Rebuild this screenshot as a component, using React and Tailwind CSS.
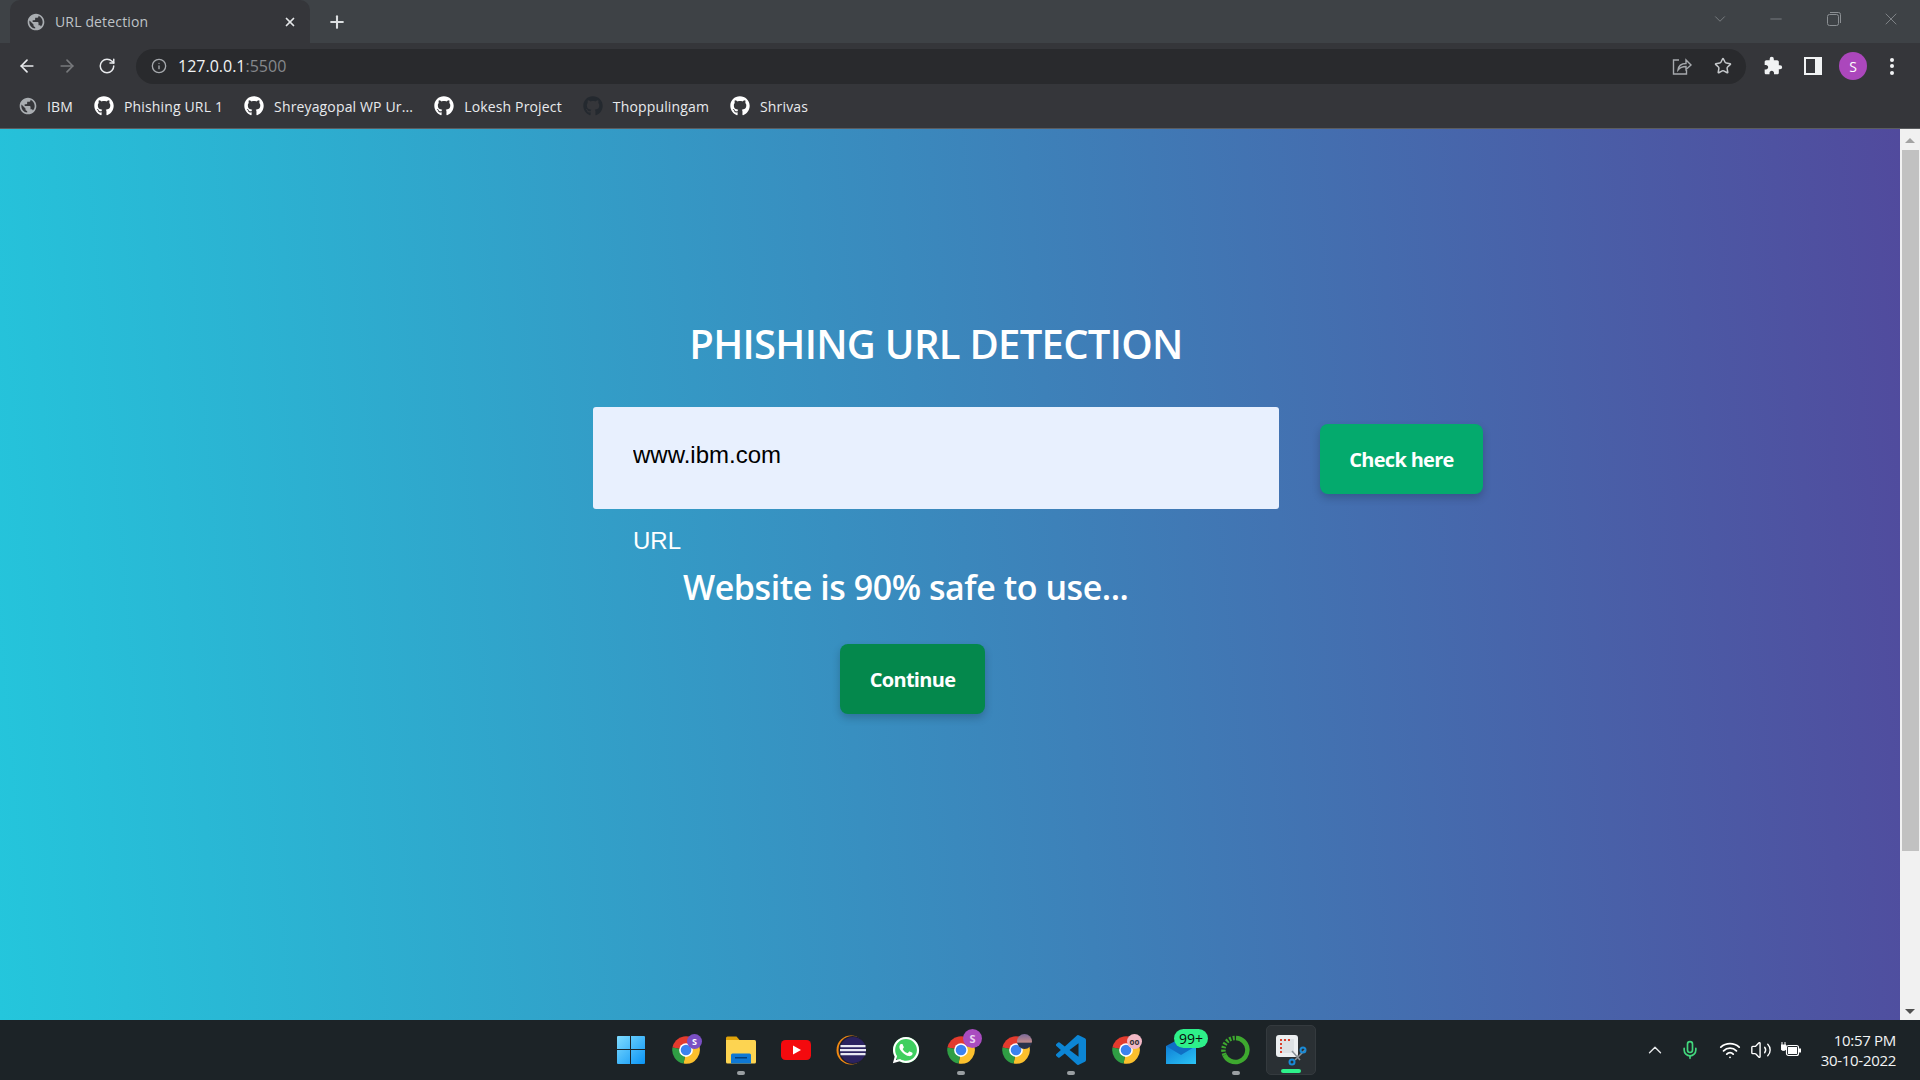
import React from "react";
import { FaGithub, FaWhatsapp } from "react-icons/fa";
import { MdPublic, MdExtension } from "react-icons/md";
import { ArrowLeft, ArrowRight, RotateCw, Info, Star, X, Plus, ChevronDown, Minus, Mic, Wifi, Volume2, ChevronUp } from "lucide-react";

const Chrome = ({ badge }) => (
  <div className="relative w-[30px] h-[30px]">
    <svg viewBox="0 0 48 48" className="w-[30px] h-[30px]">
      <path d="M24 24L2.33 20.18A22 22 0 0 1 43.05 13Z" fill="#e33b2e" />
      <path d="M24 24L43.05 13A22 22 0 0 1 20.18 45.67Z" fill="#fbc02d" />
      <path d="M24 24L20.18 45.67A22 22 0 0 1 2.33 20.18Z" fill="#2f9e44" />
      <circle cx="24" cy="24" r="11" fill="#fff" />
      <circle cx="24" cy="24" r="8.5" fill="#3b82f0" />
    </svg>
    {badge}
  </div>
);

const Win = () => (
  <svg viewBox="0 0 30 30" className="w-[30px] h-[30px]">
    <defs>
      <linearGradient id="wg" x1="0" y1="0" x2="1" y2="1">
        <stop offset="0" stopColor="#7fdcff" />
        <stop offset="1" stopColor="#0a94f5" />
      </linearGradient>
    </defs>
    <path d="M1 2a1 1 0 0 1 1-1h12v13H1ZM15 1h13a1 1 0 0 1 1 1v12H15ZM1 15h13v14H2a1 1 0 0 1-1-1ZM15 15h14v13a1 1 0 0 1-1 1H15Z" fill="url(#wg)" />
  </svg>
);

const Folder = () => (
  <svg viewBox="0 0 30 30" className="w-[30px] h-[30px]">
    <path d="M0 3a1.500 1.500 0 0 1 1.500-1.500h9L14 5.500H0Z" fill="#e0a30a" />
    <path d="M0 5h28.500a1.500 1.500 0 0 1 1.500 1.500V27a1.500 1.500 0 0 1-1.500 1.500h-27A1.500 1.500 0 0 1 0 27Z" fill="#fdd451" />
    <path d="M5 20a1.500 1.500 0 0 1 1.500-1.500h17A1.500 1.500 0 0 1 25 20v8.500H5Z" fill="#0f78d4" />
    <rect x="9" y="22" width="12" height="1.500" fill="#063f78" />
  </svg>
);

const Youtube = () => (
  <svg viewBox="0 0 30 30" className="w-[30px] h-[30px]">
    <rect x="0" y="5" width="30" height="20" rx="4.500" fill="#f40a0e" />
    <path d="M12 10.500L20 15L12 19.500Z" fill="#fff" />
  </svg>
);

const Eclipse = () => (
  <svg viewBox="0 0 30 30" className="w-[30px] h-[30px]">
    <circle cx="15" cy="15" r="14.500" fill="#f28a11" />
    <circle cx="16.500" cy="15" r="14" fill="#1c1d2e" />
    <circle cx="17" cy="15" r="13" fill="#2b2360" />
    <path d="M4.500 10h25v2.200h-25ZM4 14h26v2.200H4ZM4.500 18h25v2.200h-25Z" fill="#e8e8f2" />
  </svg>
);

const Whats = () => (
  <div className="relative w-[30px] h-[30px]">
    <div className="absolute left-[2px] top-[2px] w-[26px] h-[26px] rounded-full bg-[#3fcf5f]" />
    <FaWhatsapp className="absolute inset-0 w-[30px] h-[30px] text-white" />
  </div>
);

const VSCode = () => (
  <svg viewBox="0 0 24 24" className="w-[30px] h-[30px]">
    <path fill="#0c85d4" d="M23.15 2.587L18.21.21a1.494 1.494 0 0 0-1.705.29l-9.46 8.63-4.12-3.128a.999.999 0 0 0-1.276.057L.327 7.261A1 1 0 0 0 .326 8.74L3.899 12 .326 15.26a1 1 0 0 0 .001 1.479L1.65 17.94a.999.999 0 0 0 1.276.057l4.12-3.128 9.46 8.63a1.492 1.492 0 0 0 1.704.29l4.942-2.377A1.5 1.5 0 0 0 24 20.06V3.939a1.5 1.5 0 0 0-.85-1.352zm-5.146 14.861L10.826 12l7.178-5.448v10.896z" />
  </svg>
);

const Mail = () => (
  <div className="relative w-[30px] h-[30px]">
    <svg viewBox="0 0 30 30" className="w-[30px] h-[30px]">
      <defs>
        <linearGradient id="mg" x1="0" y1="0" x2="1" y2="1">
          <stop offset="0" stopColor="#0f7fd6" />
          <stop offset="1" stopColor="#2bc4f5" />
        </linearGradient>
      </defs>
      <path d="M0 11L15 3L30 11V29H0Z" fill="#0f6fc4" />
      <path d="M0 11L15 20L30 11V29H0Z" fill="url(#mg)" />
    </svg>
    <div className="absolute left-[8px] top-[-6px] w-[34px] h-[19px] rounded-full bg-[#2ef08a] text-[#0b0b0b] text-[14px] leading-[19px] text-center">99+</div>
  </div>
);

const Ring = () => (
  <svg viewBox="0 0 30 30" className="w-[30px] h-[30px]">
    <path d="M15 3A12 12 0 1 1 3.500 20" fill="none" stroke="#3ea82f" strokeWidth="4.500" />
    <path d="M3.500 20A12 12 0 0 1 15 3" fill="none" stroke="#3ea82f" strokeWidth="4.500" strokeDasharray="2 1.500" />
  </svg>
);

const Snip = () => (
  <svg viewBox="0 0 32 32" className="w-[32px] h-[32px]">
    <rect x="1" y="1" width="22" height="22" rx="3" fill="#eceff1" />
    <rect x="5" y="5" width="14" height="14" fill="#dde1e4" />
    <path d="M5 5h2v2H5ZM9 5h2v2H9ZM13 5h2v2h-2ZM5 9h2v2H5ZM5 13h2v2H5ZM5 17h2v2H5Z" fill="#d8402c" />
    <path d="M17 17L25 26M30 16L20 26" stroke="#8a9299" strokeWidth="1.500" fill="none" />
    <circle cx="28" cy="16" r="2.500" fill="none" stroke="#1a8ad6" strokeWidth="2" />
    <circle cx="17" cy="28" r="2.500" fill="none" stroke="#1a8ad6" strokeWidth="2" />
  </svg>
);

const Dot = ({ on }) => (
  <div className={on ? "absolute left-1/2 -translate-x-1/2 bottom-[-10px] w-[8px] h-[4px] rounded-full bg-[#9a9fa2]" : "hidden"} />
);

const Slot = ({ children, on }) => (
  <div className="relative w-[30px] h-[30px] mr-[25px]">
    {children}
    <Dot on={on} />
  </div>
);

const Mark = ({ text, dark }) => (
  <div className="flex items-center gap-[10px]">
    <FaGithub className={dark ? "w-[20px] h-[20px] text-[#24292f]" : "w-[20px] h-[20px] text-white"} />
    <span>{text}</span>
  </div>
);

export default function App() {
  return (
    <div className="h-screen w-full overflow-hidden flex flex-col font-['Open_Sans',sans-serif] bg-[#35363a]">
      {/* tab strip */}
      <div className="h-[43px] shrink-0 bg-[#3e4246] flex items-end pl-[10px] text-[#bfc3c7]">
        <div className="w-[300px] h-[43px] bg-[#35363a] rounded-t-[10px] flex items-center pl-[16px] pr-[13px]">
          <MdPublic className="w-[20px] h-[20px] text-[#a9adb1]" />
          <span className="ml-[9px] text-[14px] tracking-[0.15px] flex-1">URL detection</span>
          <X className="w-[14px] h-[14px] text-[#e4e6e8]" strokeWidth={3} />
        </div>
        <Plus className="ml-[17px] mb-[11px] w-[20px] h-[20px] text-[#dcdfe1]" strokeWidth={2.500} />
        <div className="flex-1" />
        <div className="flex items-center h-[43px] pb-[6px] text-[#8b8f93]">
          <ChevronDown className="w-[18px] h-[18px] mr-[38px]" strokeWidth={1} />
          <Minus className="w-[18px] h-[18px] mr-[42px]" strokeWidth={1} />
          <svg viewBox="0 0 14 14" className="w-[14px] h-[14px] mr-[40px]" fill="none" stroke="currentColor">
            <rect x="0.500" y="2.500" width="11" height="11" rx="2" />
            <path d="M3 .5h8.500a2 2 0 0 1 2 2V11" />
          </svg>
          <X className="w-[20px] h-[20px] mr-[19px]" strokeWidth={1} />
        </div>
      </div>
      {/* toolbar */}
      <div className="h-[44px] shrink-0 flex items-center pt-[2px]">
        <ArrowLeft className="ml-[17px] w-[20px] h-[20px] text-[#e8eaed]" strokeWidth={2} />
        <ArrowRight className="ml-[20px] w-[20px] h-[20px] text-[#77797c]" strokeWidth={2} />
        <RotateCw className="ml-[21px] w-[18px] h-[18px] text-[#e8eaed]" strokeWidth={2} />
        <div className="ml-[20px] w-[1610px] h-[35px] rounded-full bg-[#292a2d] flex items-center pl-[15px]">
          <Info className="w-[16px] h-[16px] text-[#a6a9ad]" strokeWidth={2} />
          <span className="ml-[11px] text-[16px] text-[#f1f3f4]">127.0.0.1<span className="text-[#85888c]">:5500</span></span>
          <div className="flex-1" />
          <svg viewBox="0 0 20 18" className="w-[20px] h-[18px] mr-[22px]" fill="none" stroke="#a6a9ad" strokeWidth="1.400">
            <path d="M7 3H1.500v14h13v-4" />
            <path d="M6 13c.5-4 3.500-6.500 8-6.500V3l5 5-5 4.500V9.500c-3 0-6 1-8 3.500Z" />
          </svg>
          <Star className="w-[18px] h-[18px] text-[#c5c8cb] mr-[14px]" strokeWidth={2} />
        </div>
        <MdExtension className="ml-[17px] w-[20px] h-[20px] text-[#f1f3f4]" />
        <svg viewBox="0 0 18 18" className="ml-[21px] w-[18px] h-[18px]">
          <path d="M0 0h18v18H0ZM2 2v14h9V2Z" fill="#f1f3f4" fillRule="evenodd" />
          <rect x="11" y="2" width="5" height="14" fill="#f1f3f4" />
        </svg>
        <div className="ml-[17px] w-[28px] h-[28px] rounded-full bg-[#ab47bc] text-white text-[14px] flex items-center justify-center">S</div>
        <div className="ml-[23px] flex flex-col gap-[2.500px]">
          <div className="w-[4px] h-[4px] rounded-full bg-[#f1f3f4]" />
          <div className="w-[4px] h-[4px] rounded-full bg-[#f1f3f4]" />
          <div className="w-[4px] h-[4px] rounded-full bg-[#f1f3f4]" />
        </div>
      </div>
      {/* bookmarks */}
      <div className="h-[42px] shrink-0 border-b border-[#5b5d60] flex items-center pl-[18px] pb-[3px] gap-[21px] text-[14px] tracking-[0.15px] text-[#e8eaed]">
        <div className="flex items-center gap-[9px]">
          <MdPublic className="w-[20px] h-[20px] text-[#a9adb1]" />
          <span>IBM</span>
        </div>
        <Mark text="Phishing URL 1" />
        <Mark text="Shreyagopal WP Ur..." />
        <Mark text="Lokesh Project" />
        <Mark text="Thoppulingam" dark />
        <Mark text="Shrivas" />
      </div>
      {/* page + scrollbar */}
      <div className="flex-1 min-h-0 flex">
        <main className="flex-1 bg-[linear-gradient(85deg,#24c6dc,#514a9d)] text-white pl-[593px] pt-[190px]">
          <h1 className="w-[686px] text-center text-[40px] leading-[50px] tracking-[-0.7px] font-semibold">PHISHING URL DETECTION</h1>
          <div className="mt-[38px] flex items-center">
            <input
              readOnly
              value="www.ibm.com"
              className="w-[686px] h-[102px] rounded-[3px] bg-[#e8f0fe] text-black pl-[40px] pb-[6px] text-[24px] font-['Liberation_Sans',sans-serif] outline-none"
            />
            <button className="mt-[2px] ml-[41px] w-[163px] h-[70px] pt-[2px] rounded-[8px] bg-[#04aa6d] text-white text-[20px] tracking-[-0.7px] font-bold shadow-[0_4px_8px_rgba(0,0,0,0.2)]">Check here</button>
          </div>
          <div className="mt-[16px] ml-[40px] text-[24px] leading-[32px] font-['Liberation_Sans',sans-serif]">URL</div>
          <div className="mt-[8px] ml-[90px] text-[34px] leading-[44px] tracking-[-0.45px] font-semibold">Website is 90% safe to use...</div>
          <button className="mt-[35px] ml-[247px] w-[145px] h-[70px] pt-[2px] rounded-[8px] bg-[#04884c] text-white text-[20px] tracking-[-0.7px] font-bold shadow-[0_4px_8px_rgba(0,0,0,0.2)]">Continue</button>
        </main>
        <div className="w-[20px] shrink-0 bg-[#f1f1f1] flex flex-col items-center pt-[9px]">
          <div className="w-0 h-0 border-l-[5px] border-r-[5px] border-b-[5px] border-l-transparent border-r-transparent border-b-[#a3a3a3]" />
          <div className="mt-[7px] w-[17px] ml-[1px] h-[701px] bg-[#c1c1c1]" />
          <div className="flex-1" />
          <div className="mb-[6px] w-0 h-0 border-l-[5px] border-r-[5px] border-t-[5px] border-l-transparent border-r-transparent border-t-[#505050]" />
        </div>
      </div>
      {/* taskbar */}
      <div className="h-[60px] shrink-0 bg-[#1c2327] flex items-center relative pl-[616px]">
        <Slot><Win /></Slot>
        <Slot>
          <Chrome badge={<div className="absolute right-[-1px] top-[-1px] w-[15px] h-[15px] rounded-full bg-[#7a4fc4] text-white text-[9px] leading-[15px] text-center font-bold">S</div>} />
        </Slot>
        <Slot on><Folder /></Slot>
        <Slot><Youtube /></Slot>
        <Slot><Eclipse /></Slot>
        <Slot><Whats /></Slot>
        <Slot on>
          <Chrome badge={<div className="absolute right-[-6px] top-[-6px] w-[19px] h-[19px] rounded-full bg-[#a94cc0] text-[#ead5f2] text-[11px] leading-[19px] text-center font-bold">S</div>} />
        </Slot>
        <Slot>
          <Chrome badge={<div className="absolute right-[-1px] top-[-1px] w-[15px] h-[15px] rounded-full bg-[linear-gradient(180deg,#7a6a9a,#c08a8a_55%,#28324a_60%)]" />} />
        </Slot>
        <Slot on><VSCode /></Slot>
        <Slot>
          <Chrome badge={<div className="absolute right-[-1px] top-[-1px] w-[15px] h-[15px] rounded-full bg-[#f2b8c6] text-[#333] text-[8px] leading-[15px] text-center font-bold">oo</div>} />
        </Slot>
        <Slot><Mail /></Slot>
        <Slot on><Ring /></Slot>
        <div className="relative -ml-[10px] w-[50px] h-[50px] rounded-[5px] bg-[#2a3034] border border-[#343a3e] flex items-center justify-center">
          <Snip />
          <div className="absolute left-1/2 -translate-x-1/2 bottom-[1px] w-[20px] h-[4px] rounded-full bg-[#2ef08a]" />
        </div>
        <div className="absolute right-[24px] top-0 h-[60px] flex items-center text-white">
          <ChevronUp className="w-[22px] h-[22px] text-[#e6e8ea]" strokeWidth={1.500} />
          <Mic className="ml-[14px] w-[20px] h-[20px] text-[#42d77d]" strokeWidth={2} />
          <Wifi className="ml-[19px] w-[22px] h-[22px]" strokeWidth={2} />
          <Volume2 className="ml-[9px] w-[22px] h-[22px]" strokeWidth={1.500} />
          <svg viewBox="0 0 20 18" className="ml-[9px] w-[20px] h-[18px]" fill="#fff">
            <path d="M1 1v3M4 1v3M0 4h5v3a2.500 2.500 0 0 1-5 0Z" stroke="#fff" />
            <rect x="5.500" y="4.500" width="12" height="10" rx="2" fill="none" stroke="#fff" strokeWidth="1.200" />
            <rect x="7" y="6" width="9" height="7" />
            <rect x="18" y="7.500" width="2" height="4" />
          </svg>
          <div className="ml-[20px] pb-[1px] text-right text-[15px] leading-[20px] tracking-[-0.3px] text-[#f2f4f5]">
            <div>10:57 PM</div>
            <div>30-10-2022</div>
          </div>
        </div>
      </div>
    </div>
  );
}
